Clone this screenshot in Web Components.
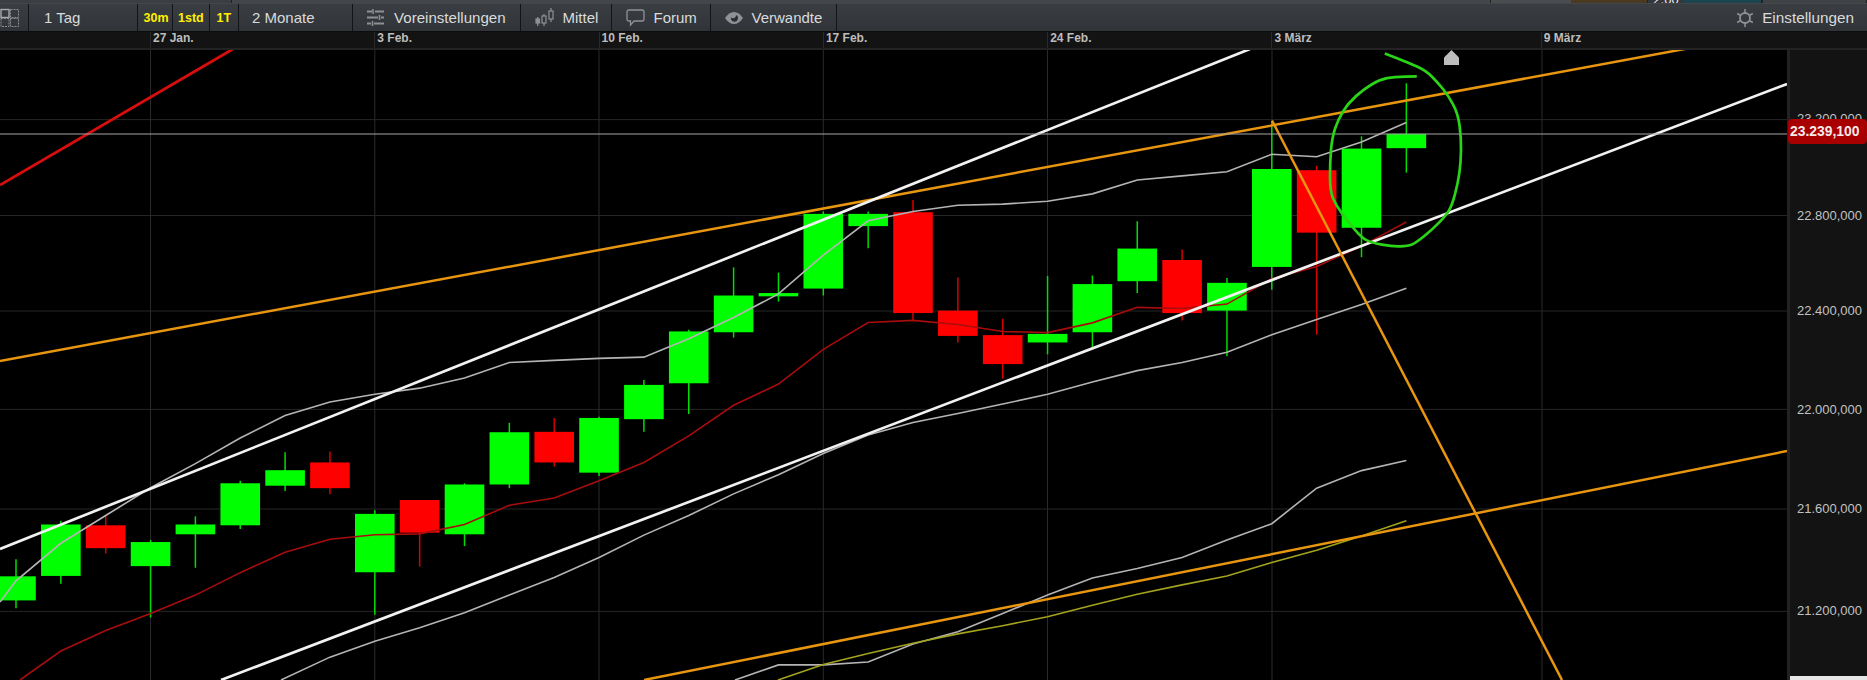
<!DOCTYPE html>
<html>
<head>
<meta charset="utf-8">
<title>Chart</title>
<style>
  html, body { margin: 0; background: #000; height: 100%; overflow: hidden; font-family: "Liberation Sans", Arial, sans-serif; }
  body { display: flex; flex-direction: column; }
</style>
</head>
<body>
<top-strip></top-strip>
<tool-bar>
  <tool-item width="29" pad="0">
    <svg width="20" height="20" viewBox="0 0 20 20" fill="none" stroke="#8c8f91" stroke-width="1"><rect x="1" y="1.5" width="8" height="8" stroke="#a9acae" stroke-width="1.4"/><rect x="10.5" y="1.5" width="8" height="8" stroke-dasharray="2 1"/><rect x="1" y="10.5" width="8" height="8" stroke-dasharray="2 1"/><rect x="10.5" y="10.5" width="8" height="8" stroke-dasharray="2 1"/></svg>
  </tool-item>
  <tool-item width="108.5" pad="15">1 Tag</tool-item>
  <tool-item width="35.5" pad="6" active>30m</tool-item>
  <tool-item width="36.5" pad="5" active>1std</tool-item>
  <tool-item width="29" pad="7" active>1T</tool-item>
  <tool-item width="114.5" pad="13.5">2 Monate</tool-item>
  <tool-item width="167.5" pad="14" gap="9">
    <svg width="18" height="17" viewBox="0 0 18 17" fill="none" stroke="#8f9294" stroke-width="2"><path d="M0 2.5H5M8 2.5H17M0 8.5H11M14 8.5H17M0 14.5H4M7 14.5H17"/><path d="M6 0V5M12.5 6V11M5.500 12V17" stroke-width="1.500"/></svg>
    <span style="font-size:15.1px">Voreinstellungen</span>
  </tool-item>
  <tool-item width="91" pad="14" gap="9">
    <svg width="19" height="19" viewBox="0 0 19 19" fill="none" stroke="#8f9294" stroke-width="1.200"><rect x="1" y="11" width="3.500" height="4" fill="#8f9294"/><path d="M2.700 9V18M9 6V18M16 0V14"/><rect x="7" y="8" width="4" height="7" fill="#34383c"/><rect x="14" y="3" width="4" height="8" fill="#34383c"/></svg>
    Mittel
  </tool-item>
  <tool-item width="99" pad="14" gap="9">
    <svg width="19" height="18" viewBox="0 0 19 18" fill="none" stroke="#8f9294" stroke-width="1.300"><path d="M3 1H16Q18 1 18 3V10Q18 12 16 12H8L4.500 16V12H3Q1 12 1 10V3Q1 1 3 1Z"/></svg>
    Forum
  </tool-item>
  <tool-item width="126.5" pad="14" gap="9">
    <svg width="18" height="14" viewBox="0 0 18 14"><path d="M0 7Q4 1 9 1T18 7Q14 13 9 13T0 7Z" fill="#8f9294"/><path d="M6 6.500A3.500 3.500 0 1 0 11 4 3 3 0 0 1 6 6.500Z" fill="#2c2f32"/></svg>
    Verwandte
  </tool-item>
  <tool-spacer></tool-spacer>
  <tool-item pad="0" gap="8" end>
    <svg width="18" height="18" viewBox="0 0 18 18" fill="none" stroke="#8f9294" stroke-width="1.800"><circle cx="9" cy="9" r="5"/><path d="M9 0V4M9 14V18M1.200 4.500L4.700 6.500M13.300 11.500L16.800 13.500M1.200 13.500L4.700 11.500M13.300 6.500L16.800 4.500" stroke-width="1.500"/></svg>
    <span style="font-size:15.3px">Einstellungen</span>
  </tool-item>
</tool-bar>
<date-axis labels="27 Jan.|3 Feb.|10 Feb.|17 Feb.|24 Feb.|3 März|9 März"></date-axis>
<chart-area>
  <price-chart></price-chart>
  <price-axis></price-axis>
</chart-area>

<script>
class TopStrip extends HTMLElement {
  constructor() {
    super();
    this.attachShadow({ mode: "open" });
  }

  connectedCallback() {
    this.shadowRoot.innerHTML = `
      <style>
        :host { display: flex; height: 4px; flex: none; overflow: hidden; background: #4a4d50; border-bottom: 0; }
        div { height: 3px; background: #3b3f43; border-right: 1px solid #222; }
        .brown { width: 76px; background: #4a3a22; }
        .teal { width: 77px; background: #1b4650; }
        .val { width: 36px; background: #34373a; color: #eee; font: 13px "Liberation Sans", Arial, sans-serif; line-height: 4px; text-align: center; overflow: hidden; border: 0; }
        .val span { display: block; margin-top: -5px; line-height: 10px; }
      </style>
      <div style="width:231px"></div>
      <div style="width:1258px;background:#43474a"></div>
      <div style="width:80px;background:#4a4d50;border:0"></div>
      <div class="brown"></div>
      <div class="val"><span>2,00</span></div>
      <div class="teal"></div>
      <div style="flex:1;background:#3f4346;border-left:1px solid #222"></div>
    `;
  }
}
customElements.define("top-strip", TopStrip);

class ToolBar extends HTMLElement {
  constructor() {
    super();
    this.attachShadow({ mode: "open" });
  }

  connectedCallback() {
    this.shadowRoot.innerHTML = `
      <style>
        :host {
          display: flex; height: 27px; flex: none;
          background: linear-gradient(#3a3e42, #303438);
          border-top: 1px solid #43474a;
          border-bottom: 1px solid #0c0c0c;
          box-sizing: content-box;
          margin-top: -1px;
        }
      </style>
      <slot></slot>
    `;
  }
}
customElements.define("tool-bar", ToolBar);

class ToolSpacer extends HTMLElement {
  constructor() {
    super();
    this.attachShadow({ mode: "open" });
    this.shadowRoot.innerHTML = `<style>:host { display: block; flex: 1; }</style>`;
  }
}
customElements.define("tool-spacer", ToolSpacer);

class ToolItem extends HTMLElement {
  constructor() {
    super();
    this.attachShadow({ mode: "open" });
  }

  connectedCallback() {
    const width = this.getAttribute("width");
    const pad = this.getAttribute("pad") || 0;
    const gap = this.getAttribute("gap") || 0;
    const active = this.hasAttribute("active");
    const end = this.hasAttribute("end");
    this.shadowRoot.innerHTML = `
      <style>
        :host {
          display: flex; align-items: center; flex: none; box-sizing: border-box;
          width: ${width ? width + "px" : "auto"};
          padding-left: ${pad}px;
          padding-right: ${end ? 13 : 0}px;
          gap: ${gap}px;
          border-right: ${end ? 0 : "1px solid #121416"};
          color: ${active ? "#fff000" : "#d9dbdc"};
          font: ${active ? "bold 12.5px" : "15px"} "Liberation Sans", Arial, sans-serif;
          white-space: nowrap;
        }
      </style>
      <slot></slot>
    `;
  }
}
customElements.define("tool-item", ToolItem);

class DateAxis extends HTMLElement {
  constructor() {
    super();
    this.attachShadow({ mode: "open" });
  }

  connectedCallback() {
    const labels = this.getAttribute("labels").split("|");
    const cells = labels.map((label) => `<span>${label}</span>`).join("");
    this.shadowRoot.innerHTML = `
      <style>
        :host {
          display: flex; flex: none; height: 16px; box-sizing: content-box;
          padding-left: 150px; background: #131313;
          border-bottom: 2px solid #232323;
          color: #bdbdbd; font: bold 12px "Liberation Sans", Arial, sans-serif;
        }
        span { width: 224.3px; flex: none; box-sizing: border-box; padding: 0 0 0 2px; border-left: 1px solid #2a2a2a; line-height: 12px; }
        span:last-child { margin-left: 45px; }
      </style>
      ${cells}
    `;
  }
}
customElements.define("date-axis", DateAxis);

class ChartArea extends HTMLElement {
  constructor() {
    super();
    this.attachShadow({ mode: "open" });
    this.shadowRoot.innerHTML = `
      <style>:host { display: flex; flex: 1; min-height: 0; }</style>
      <slot></slot>
    `;
  }
}
customElements.define("chart-area", ChartArea);

// candle values are [colour, wick top, body top, body bottom, wick bottom] read from the chart
const CANDLES = [
  ["g", 1272, 1314, 1373, 1392], ["g", 1178, 1187, 1313, 1332], ["r", 1165, 1189, 1245, 1258],
  ["g", 1225, 1230, 1289, 1415], ["g", 1167, 1187, 1211, 1293], ["g", 1080, 1086, 1189, 1198],
  ["g", 1010, 1054, 1092, 1105], ["r", 1008, 1035, 1098, 1113], ["g", 1152, 1161, 1304, 1408],
  ["r", 1127, 1127, 1207, 1290], ["g", 1086, 1089, 1211, 1240], ["g", 938, 961, 1089, 1098],
  ["r", 926, 960, 1035, 1045], ["g", 923, 926, 1060, 1068], ["g", 833, 845, 929, 960],
  ["g", 710, 714, 841, 916], ["g", 557, 626, 716, 729], ["g", 570, 620, 628, 641],
  ["g", 420, 426, 609, 626], ["g", 420, 426, 456, 510], ["r", 392, 422, 669, 686],
  ["r", 582, 663, 725, 741], ["r", 683, 723, 794, 830], ["g", 578, 720, 741, 770],
  ["g", 577, 598, 716, 755], ["g", 444, 511, 591, 620], ["r", 513, 539, 669, 687],
  ["g", 583, 595, 663, 775], ["g", 200, 316, 556, 612], ["r", 308, 319, 472, 722],
  ["g", 236, 266, 460, 532], ["g", 106, 230, 265, 325],
];

// averages, one value per candle, starting at candle "from"
const AVERAGES = [
  { color: "#b4b4b4", from: 0, start: [0, 1377], values: [1325, 1233, 1165, 1097, 1038, 975, 920, 887, 868, 853, 828, 790, 785, 780, 777, 732, 680, 622, 527, 443, 420, 405, 402, 395, 377, 343, 333, 323, 280, 286, 250, 202] },
  { color: "#a80c0c", from: 1, start: [20, 1568], values: [1497, 1447, 1405, 1360, 1305, 1255, 1223, 1212, 1210, 1187, 1140, 1122, 1080, 1035, 970, 895, 843, 758, 692, 687, 697, 714, 717, 693, 655, 658, 647, 585, 555, 505, 446] },
  { color: "#b4b4b4", from: 7, start: [281, 1568], values: [1512, 1473, 1440, 1403, 1360, 1317, 1268, 1213, 1165, 1112, 1065, 1013, 968, 937, 915, 892, 868, 838, 810, 790, 765, 722, 685, 648, 608] },
  { color: "#b4b4b4", from: 17, start: [735, 1568], values: [1531, 1531, 1524, 1480, 1450, 1405, 1360, 1318, 1295, 1268, 1225, 1185, 1098, 1055, 1030] },
  { color: "#a3a31c", from: 18, start: [778, 1568], values: [1530, 1503, 1478, 1455, 1435, 1413, 1385, 1358, 1335, 1313, 1280, 1250, 1215, 1178] },
];

const TRENDS = [
  ["#d90d0d", 2.8, 0, 185, 233, 49],
  ["#e8950f", 2.5, 0, 361, 1690, 48],
  ["#f2f2f2", 2.7, 0, 549, 1250, 49],
  ["#f2f2f2", 2.7, 221, 680, 1787, 84],
  ["#e8950f", 2.5, 644, 680, 1787, 451],
  ["#e8950f", 2.5, 1272, 120.5, 1562, 680],
];

const CIRCLE = [[362, 33], [420, 55], [465, 75], [495, 105], [520, 135], [545, 180], [553, 240], [552, 300], [545, 350], [530, 405], [515, 430], [480, 465], [440, 497], [420, 505], [380, 506], [330, 497], [305, 485], [270, 445], [240, 405], [225, 370], [225, 300], [230, 240], [245, 195], [270, 155], [310, 120], [350, 97], [385, 90], [442, 89]];

const candleX = (k) => 16 + k * 44.85;
const scanY = (v) => 40 + v / 2.45 - 50;

class PriceChart extends HTMLElement {
  constructor() {
    super();
    this.attachShadow({ mode: "open" });
  }

  connectedCallback() {
    const grid = [119.6, 215.5, 311, 409.4, 509, 611.4]
      .map((y) => `<path d="M0 ${y - 50}H1787" stroke="#262626"/>`).join("")
      + [150.5, 374.8, 599, 823.3, 1047.5, 1272, 1542]
      .map((x) => `<path d="M${x} 0V630" stroke="#2a2a2a"/>`).join("");

    const candles = CANDLES.map(([c, wt, bt, bb, wb], k) => {
      const x = candleX(k);
      const fill = c === "g" ? "#00ff00" : "#ff0000";
      const wick = c === "g" ? "#00dd00" : "#d80000";
      return `<path d="M${x} ${scanY(wt)}V${scanY(wb)}" stroke="${wick}" stroke-width="1.5"/>`
        + `<rect x="${x - 19.8}" y="${scanY(bt)}" width="39.600" height="${(bb - bt) / 2.45}" fill="${fill}"/>`;
    }).join("");

    const averages = AVERAGES.map(({ color, from, start, values }) => {
      const pts = [`${start[0]},${scanY(start[1])}`]
        .concat(values.map((v, i) => `${candleX(from + i)},${scanY(v)}`));
      return `<polyline points="${pts.join(" ")}" fill="none" stroke="${color}" stroke-width="1.6"/>`;
    }).join("");

    const trends = TRENDS.map(([color, w, x1, y1, x2, y2]) =>
      `<line x1="${x1}" y1="${y1 - 50}" x2="${x2}" y2="${y2 - 50}" stroke="${color}" stroke-width="${w}"/>`).join("");

    // hand drawn ring, smoothed through the midpoints
    const ring = CIRCLE.map(([x, y]) => [1240 + x / 2.5, scanY(y)]);
    let d = `M${ring[0][0]} ${ring[0][1]}`;
    for (let i = 1; i < ring.length - 1; i++) {
      const mx = (ring[i][0] + ring[i + 1][0]) / 2;
      const my = (ring[i][1] + ring[i + 1][1]) / 2;
      d += `Q${ring[i][0]} ${ring[i][1]} ${mx} ${my}`;
    }
    d += `L${ring[ring.length - 1][0]} ${ring[ring.length - 1][1]}`;

    this.shadowRoot.innerHTML = `
      <style>
        :host { display: block; width: 1787px; flex: none; background: #000; overflow: hidden; }
        svg { display: block; }
      </style>
      <svg width="1787" height="630" viewBox="0 0 1787 630">
        ${grid}
        ${candles}
        ${averages}
        ${trends}
        <path d="M0 84H1787" stroke="#a6a6a6" stroke-width="1.200"/>
        <path d="${d}" fill="none" stroke="#2ad416" stroke-width="2.700"/>
        <path d="M1444 7.500L1451.500 0L1459 7.500V15H1444Z" fill="#bdbdbd"/>
      </svg>
    `;
  }
}
customElements.define("price-chart", PriceChart);

class PriceAxis extends HTMLElement {
  constructor() {
    super();
    this.attachShadow({ mode: "open" });
  }

  connectedCallback() {
    this.shadowRoot.innerHTML = `
      <style>
        :host {
          display: grid; position: relative; flex: 1; box-sizing: border-box;
          grid-template-rows: 97px 95px 99px 99px 102px 1fr;
          padding: 61px 0 0 7px;
          background: #131313; border-left: 3px solid #222;
          color: #c2c2c2; font: 13px/16px "Liberation Sans", Arial, sans-serif;
        }
        .now {
          position: absolute; left: -2px; right: 0; top: 69px; height: 25px;
          background: #a80000; border-radius: 4px; color: #f6eaea;
          font: bold 13.900px/25px "Liberation Sans", Arial, sans-serif; padding-left: 2px;
        }
        .foot { position: absolute; left: 0; right: 0; bottom: 0; height: 4px; background: #e6e6e6; }
      </style>
      <span>23.200,000</span>
      <span>22.800,000</span>
      <span>22.400,000</span>
      <span>22.000,000</span>
      <span>21.600,000</span>
      <span>21.200,000</span>
      <div class="now">23.239,100</div>
      <div class="foot"></div>
    `;
  }
}
customElements.define("price-axis", PriceAxis);
</script>
</body>
</html>
